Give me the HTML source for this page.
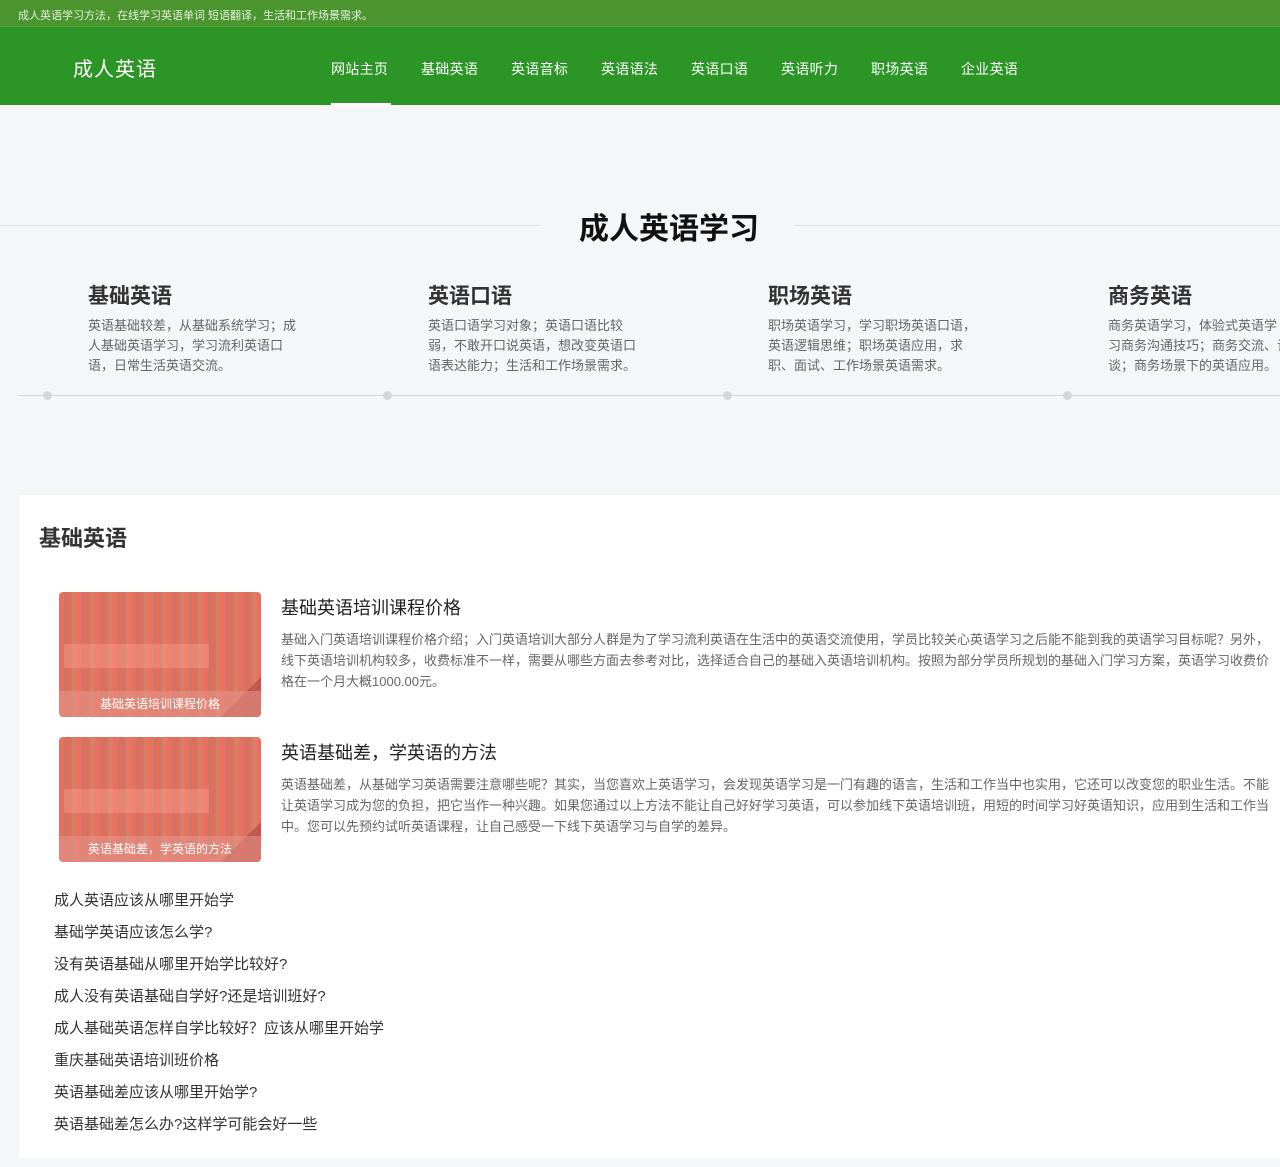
<!DOCTYPE html>
<html><head><meta charset="utf-8"><style>
*{margin:0;padding:0;box-sizing:border-box}
body{width:1280px;height:1167px;overflow:hidden;background:#f4f6f8;font-family:"Liberation Sans","Noto Sans CJK SC",sans-serif;position:relative}
.a{position:absolute;white-space:nowrap}
.top{position:absolute;left:0;top:0;width:1280px;height:27px;background:#4b952f;border-bottom:1px solid #5aa23c}
.top span{position:absolute;left:18px;top:7px;font-size:11px;color:#e6f0de}
.nav{position:absolute;left:0;top:27px;width:1280px;height:78px;background:#2b9526}
.logo{left:73px;top:26px;font-size:20px;color:#fff;letter-spacing:1px}
.nav a{position:absolute;top:32px;font-size:14px;color:#fff;text-decoration:none;letter-spacing:.3px}
.ul{position:absolute;left:331px;top:76px;width:60px;height:3px;background:#fff}
.hl{position:absolute;top:225px;height:1px;background:#dde2e6}
.h1{left:29px;width:1280px;text-align:center;top:204px;font-size:30px;font-weight:bold;color:#111}
.col{position:absolute;top:280px;width:220px}
.col h3{font-size:21px;font-weight:bold;color:#333;margin-bottom:6px;white-space:nowrap}
.col p{font-size:13px;line-height:20px;color:#666;width:215px}
.tl{position:absolute;left:18px;top:395px;width:1262px;height:1px;background:#d4d8dc}
.dot{position:absolute;top:391px;width:9px;height:9px;border-radius:50%;background:#d4d8dc}
.panel{position:absolute;left:19px;top:495px;width:1261px;height:663px;background:#fff}
.pt{left:39px;top:521px;font-size:22px;font-weight:bold;color:#333}
.img{position:absolute;left:59px;width:202px;height:125px;border-radius:4px;overflow:hidden;
background:repeating-linear-gradient(90deg,#e8705e 0 5px,#c07a6c 5px 7px,#ea6a58 7px 11px,#b9806f 11px 13px,#e27a64 13px 18px);}
.img .b{position:absolute;left:5px;top:52px;width:145px;height:24px;background:rgba(255,170,150,.35)}
.img .c{position:absolute;left:0;bottom:0;width:100%;height:26px;background:rgba(230,150,140,.55);color:#fff;font-size:12px;text-align:center;line-height:26px}
.img .d{position:absolute;right:0;bottom:0;width:0;height:0;border-left:40px solid transparent;border-bottom:40px solid rgba(160,50,50,.45)}
.it{left:281px;font-size:18px;color:#222}
.ds{position:absolute;left:281px;width:1000px;font-size:13px;line-height:21px;color:#666}
.li{left:54px;font-size:15px;color:#333}
</style></head><body>
<div class="top"><span>成人英语学习方法，在线学习英语单词 短语翻译，生活和工作场景需求。</span></div>
<div class="nav">
<div class="a logo">成人英语</div>
<a style="left:331px">网站主页</a><a style="left:421px">基础英语</a><a style="left:511px">英语音标</a><a style="left:601px">英语语法</a><a style="left:691px">英语口语</a><a style="left:781px">英语听力</a><a style="left:871px">职场英语</a><a style="left:961px">企业英语</a>
<div class="ul"></div>
</div>
<div class="hl" style="left:0;width:540px"></div>
<div class="hl" style="left:795px;width:485px"></div>
<div class="a h1">成人英语学习</div>
<div class="col" style="left:88px"><h3>基础英语</h3><p>英语基础较差，从基础系统学习；成人基础英语学习，学习流利英语口语，日常生活英语交流。</p></div>
<div class="col" style="left:428px"><h3>英语口语</h3><p>英语口语学习对象；英语口语比较弱，不敢开口说英语，想改变英语口语表达能力；生活和工作场景需求。</p></div>
<div class="col" style="left:768px"><h3>职场英语</h3><p>职场英语学习，学习职场英语口语，英语逻辑思维；职场英语应用，求职、面试、工作场景英语需求。</p></div>
<div class="col" style="left:1108px;width:180px;overflow:hidden"><h3>商务英语</h3><p style="width:182px;white-space:nowrap">商务英语学习，体验式英语学<br>习商务沟通技巧；商务交流、谈<br>谈；商务场景下的英语应用。</p></div>
<div class="tl"></div>
<div class="dot" style="left:43px"></div><div class="dot" style="left:383px"></div><div class="dot" style="left:723px"></div><div class="dot" style="left:1063px"></div>
<div class="panel"></div>
<div class="a pt">基础英语</div>
<div class="img" style="top:592px"><div class="b"></div><div class="d"></div><div class="c">基础英语培训课程价格</div></div>
<div class="a it" style="top:594px">基础英语培训课程价格</div>
<div class="ds" style="top:629px">基础入门英语培训课程价格介绍；入门英语培训大部分人群是为了学习流利英语在生活中的英语交流使用，学员比较关心英语学习之后能不能到我的英语学习目标呢？另外，线下英语培训机构较多，收费标准不一样，需要从哪些方面去参考对比，选择适合自己的基础入英语培训机构。按照为部分学员所规划的基础入门学习方案，英语学习收费价格在一个月大概1000.00元。</div>
<div class="img" style="top:737px"><div class="b"></div><div class="d"></div><div class="c">英语基础差，学英语的方法</div></div>
<div class="a it" style="top:739px">英语基础差，学英语的方法</div>
<div class="ds" style="top:774px">英语基础差，从基础学习英语需要注意哪些呢？其实，当您喜欢上英语学习，会发现英语学习是一门有趣的语言，生活和工作当中也实用，它还可以改变您的职业生活。不能让英语学习成为您的负担，把它当作一种兴趣。如果您通过以上方法不能让自己好好学习英语，可以参加线下英语培训班，用短的时间学习好英语知识，应用到生活和工作当中。您可以先预约试听英语课程，让自己感受一下线下英语学习与自学的差异。</div>
<div class="a li" style="top:889px">成人英语应该从哪里开始学</div>
<div class="a li" style="top:921px">基础学英语应该怎么学?</div>
<div class="a li" style="top:953px">没有英语基础从哪里开始学比较好?</div>
<div class="a li" style="top:985px">成人没有英语基础自学好?还是培训班好?</div>
<div class="a li" style="top:1017px">成人基础英语怎样自学比较好？应该从哪里开始学</div>
<div class="a li" style="top:1049px">重庆基础英语培训班价格</div>
<div class="a li" style="top:1081px">英语基础差应该从哪里开始学?</div>
<div class="a li" style="top:1113px">英语基础差怎么办?这样学可能会好一些</div>
</body></html>
